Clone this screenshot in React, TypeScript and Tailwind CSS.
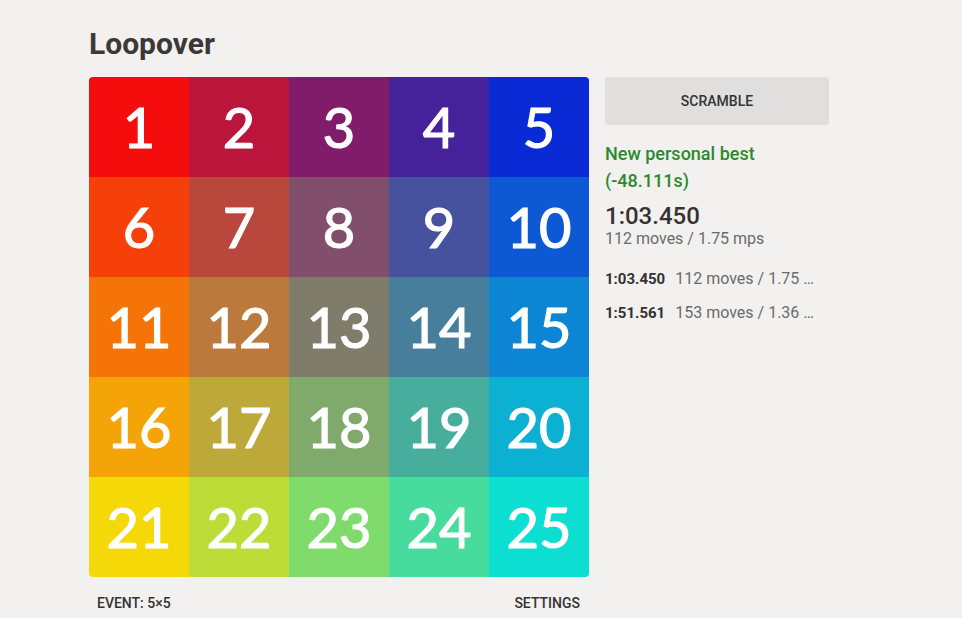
import React from 'react';

const tiles: { n: number; bg: string }[][] = [
  [
    { n: 1, bg: 'bg-[#f50c0c]' },
    { n: 2, bg: 'bg-[#ba153a]' },
    { n: 3, bg: 'bg-[#801c6a]' },
    { n: 4, bg: 'bg-[#46229a]' },
    { n: 5, bg: 'bg-[#0a2ad6]' },
  ],
  [
    { n: 6, bg: 'bg-[#f5400a]' },
    { n: 7, bg: 'bg-[#b9473c]' },
    { n: 8, bg: 'bg-[#814f6c]' },
    { n: 9, bg: 'bg-[#46529e]' },
    { n: 10, bg: 'bg-[#0c59d3]' },
  ],
  [
    { n: 11, bg: 'bg-[#f57408]' },
    { n: 12, bg: 'bg-[#bb7a3c]' },
    { n: 13, bg: 'bg-[#807c6c]' },
    { n: 14, bg: 'bg-[#467e9c]' },
    { n: 15, bg: 'bg-[#0c86d4]' },
  ],
  [
    { n: 16, bg: 'bg-[#f5a408]' },
    { n: 17, bg: 'bg-[#bca93a]' },
    { n: 18, bg: 'bg-[#80aa6c]' },
    { n: 19, bg: 'bg-[#47ad9c]' },
    { n: 20, bg: 'bg-[#0cb0d2]' },
  ],
  [
    { n: 21, bg: 'bg-[#f5d808]' },
    { n: 22, bg: 'bg-[#bedc38]' },
    { n: 23, bg: 'bg-[#7fdb6c]' },
    { n: 24, bg: 'bg-[#47dc9e]' },
    { n: 25, bg: 'bg-[#0cdfd2]' },
  ],
];

const history = [
  { time: '1:03.450', info: '112 moves / 1.75 mps' },
  { time: '1:51.561', info: '153 moves / 1.36 mps' },
];

export default function App() {
  return (
    <div className="min-h-[618px] w-full bg-[#f2f1ef] font-['Roboto','Liberation_Sans',sans-serif] text-[#333]">
      <div className="pl-[89px] pt-[26px]">
        <h1 className="text-[30px] font-bold leading-[36px] text-[#3b3838]">Loopover</h1>

        <div className="mt-[15px] flex items-start gap-4">
          <div className="w-[500px]">
            {/* Board */}
            <div className="overflow-hidden rounded-[4px] font-['Lato',sans-serif]">
              {tiles.map((row, r) => (
                <div key={r} className="flex">
                  {row.map((t) => (
                    <div
                      key={t.n}
                      className={`flex h-[100px] w-[100px] items-center justify-center text-[56px] font-normal leading-none text-white [-webkit-text-stroke:1.2px_white] ${t.bg}`}
                    >
                      {t.n}
                    </div>
                  ))}
                </div>
              ))}
            </div>

            <div className="mt-[16px] flex items-center justify-between pl-2 pr-[9px] text-[14px] font-medium uppercase leading-[20px] text-[#333]">
              <span>Event: 5×5</span>
              <span>Settings</span>
            </div>
          </div>

          {/* Side panel */}
          <div className="w-[224px]">
            <button className="h-[48px] w-full rounded-[3px] bg-[#e0dfdd] text-[14px] font-medium uppercase text-[#333]">
              Scramble
            </button>

            <div className="mt-[15px] text-[18px] font-medium leading-[27px] text-[#2a8a2c]">
              <div>New personal best</div>
              <div>(-48.111s)</div>
            </div>

            <div className="mt-[8px] text-[24px] font-medium leading-[28px] text-[#333]">1:03.450</div>
            <div className="text-[16px] leading-[18px] text-[#6b6b6b]">112 moves / 1.75 mps</div>

            <div className="mt-[21px] flex flex-col gap-[14px]">
              {history.map((h) => (
                <div key={h.time} className="flex w-[214px] items-baseline gap-[10px] leading-[20px]">
                  <span className="shrink-0 text-[15px] font-bold text-[#333]">{h.time}</span>
                  <span className="truncate text-[16px] text-[#6b6b6b]">{h.info}</span>
                </div>
              ))}
            </div>
          </div>
        </div>
      </div>
    </div>
  );
}
